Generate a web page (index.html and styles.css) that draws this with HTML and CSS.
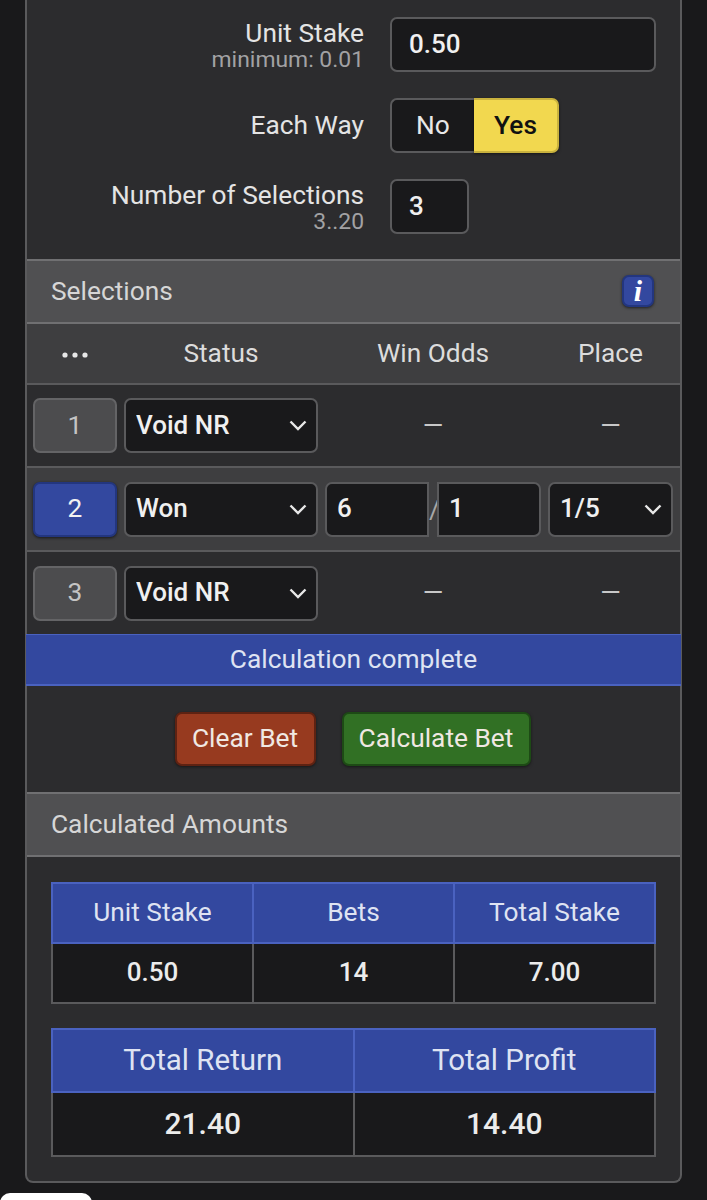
FILE: index.html
```html
<!DOCTYPE html>
<html lang="en">
<head>
    <meta charset="UTF-8">
    <meta name="viewport" content="width=device-width, initial-scale=1.0">
    <title>Bet Calculator</title>
    <link rel="stylesheet" href="styles.css">
</head>
<body>
    <div id="panel">
        <div class="form">
            <div class="field">
                <label class="label" for="unitStake">Unit Stake<small>minimum: 0.01</small></label>
                <input class="input stake" id="unitStake" type="text" value="0.50">
            </div>
            <div class="field">
                <span class="label label-single">Each Way</span>
                <div class="toggle">
                    <button class="toggle-no">No</button>
                    <button class="toggle-yes">Yes</button>
                </div>
            </div>
            <div class="field">
                <label class="label" for="numSelections">Number of Selections<small>3..20</small></label>
                <input class="input count" id="numSelections" type="text" value="3">
            </div>
        </div>

        <div class="section-head">
            <span>Selections</span>
            <button class="info">i</button>
        </div>

        <div class="row row-head">
            <span class="cell-center">
                <svg class="dots" width="26" height="6" viewBox="0 0 26 6"><circle cx="3" cy="3" r="2.6"/><circle cx="13" cy="3" r="2.6"/><circle cx="23" cy="3" r="2.6"/></svg>
            </span>
            <span class="cell-center">Status</span>
            <span class="cell-center">Win Odds</span>
            <span class="cell-center">Place</span>
        </div>

        <div class="row">
            <button class="num">1</button>
            <select class="input select"><option>Void NR</option></select>
            <span class="cell-center dash">—</span>
            <span class="cell-center dash">—</span>
        </div>
        <div class="row row-active">
            <button class="num num-active">2</button>
            <select class="input select"><option>Won</option></select>
            <div class="odds">
                <input class="input odds-left" type="text" value="6">
                <span class="slash">/</span>
                <input class="input odds-right" type="text" value="1">
            </div>
            <select class="input select"><option>1/5</option></select>
        </div>
        <div class="row row-last">
            <button class="num">3</button>
            <select class="input select"><option>Void NR</option></select>
            <span class="cell-center dash">—</span>
            <span class="cell-center dash">—</span>
        </div>

        <div class="message">Calculation complete</div>

        <div class="actions">
            <button class="btn btn-clear">Clear Bet</button>
            <button class="btn btn-calc">Calculate Bet</button>
        </div>

        <div class="section-head">
            <span>Calculated Amounts</span>
        </div>

        <div class="results">
            <table class="amounts">
                <tr><th>Unit Stake</th><th>Bets</th><th>Total Stake</th></tr>
                <tr><td>0.50</td><td>14</td><td>7.00</td></tr>
            </table>
            <table class="amounts amounts-big">
                <tr><th>Total Return</th><th>Total Profit</th></tr>
                <tr><td>21.40</td><td>14.40</td></tr>
            </table>
        </div>
    </div>
    <div class="tab"></div>
</body>
</html>
```

FILE: styles.css
```css
/* base */
html {
    height: 100%;
}

body {
    font-family: Roboto, "Liberation Sans", sans-serif;
    font-size: 26.3px;
    color: #e4e4e4;
    background-color: #19191b;
    margin: 0;
    height: 1200px;
    overflow: hidden;
    position: relative;
}

button, input, select {
    font-family: inherit;
    font-size: inherit;
}

#panel {
    width: 657px;
    box-sizing: border-box;
    margin-left: 25px;
    height: 1183px;
    background-color: #2c2c2e;
    border: 2px solid #5a5a5c;
    border-top: none;
    border-radius: 0 0 8px 8px;
}

/* top form */
.form {
    padding: 17px 0 25px;
    display: flex;
    flex-direction: column;
    gap: 26px;
}

.field {
    display: grid;
    grid-template-columns: 337px 1fr;
    column-gap: 26px;
    align-items: center;
    min-height: 55px;
}

.label {
    text-align: right;
    line-height: 30px;
}

.label-single {
    padding-bottom: 2px;
}

.label small {
    display: block;
    font-size: 22.9px;
    line-height: 24px;
    color: #a2a2a4;
}

.input {
    background-color: #19191b;
    color: #f0f0f0;
    border: 2px solid #5a5a5c;
    border-radius: 7px;
    box-sizing: border-box;
    height: 55px;
    padding: 0 17px 2px;
    font-size: 26px;
    font-weight: 500;
    outline: none;
}

.stake {
    width: 266px;
}

.count {
    width: 79px;
}

.toggle {
    display: flex;
    width: 169px;
    height: 55px;
}

.toggle button {
    padding: 0 0 2px;
    cursor: pointer;
}

.toggle-no {
    width: 84px;
    background-color: #19191b;
    color: #e8e8e8;
    border: 2px solid #5a5a5c;
    border-right: none;
    border-radius: 7px 0 0 7px;
}

.toggle-yes {
    width: 85px;
    background-color: #f2d84f;
    color: #111;
    font-weight: 500;
    border: 2px solid #c9b23e;
    border-left: none;
    border-radius: 0 7px 7px 0;
    box-shadow: 0 1px 3px rgba(0, 0, 0, 0.5);
}

/* section headers */
.section-head {
    display: flex;
    align-items: center;
    justify-content: space-between;
    height: 65px;
    box-sizing: border-box;
    padding: 0 26px 1px 24px;
    background-color: #505052;
    color: #d6d6d6;
    border-top: 2px solid #707072;
    border-bottom: 2px solid #707072;
}

.info {
    width: 32px;
    height: 32px;
    padding: 0;
    background-color: #33489f;
    color: #fff;
    border: 2px solid #23367f;
    border-radius: 7px;
    font-family: "Liberation Serif", serif;
    font-style: italic;
    font-weight: bold;
    font-size: 30px;
    line-height: 26px;
    box-shadow: 0 1px 3px rgba(0, 0, 0, 0.6);
}

/* selections table */
.row {
    display: grid;
    grid-template-columns: 84px 194px 216px 125px;
    column-gap: 7px;
    align-items: center;
    height: 83px;
    box-sizing: border-box;
    padding: 0 6px;
    border-bottom: 2px solid #5a5a5c;
}

.row-head {
    height: 61px;
    padding-bottom: 2px;
    background-color: #3e3e40;
    color: #dcdcdc;
}

.row-active {
    height: 84px;
    background-color: #3e3e40;
}

.row-last {
    height: 82px;
    border-bottom: none;
}

.cell-center {
    text-align: center;
}

.dots {
    fill: #e8e8e8;
    vertical-align: middle;
}

.dash {
    color: #c8c8c8;
    padding-bottom: 2px;
}

.num {
    height: 55px;
    padding: 0 0 2px;
    background-color: #4c4c4e;
    color: #c4c4c4;
    border: 2px solid #646466;
    border-radius: 7px;
}

.num-active {
    background-color: #33489f;
    color: #f2f2f2;
    border-color: #23367f;
    box-shadow: 0 1px 3px rgba(0, 0, 0, 0.6);
}

.select {
    width: 100%;
    padding: 0 10px 2px;
    appearance: none;
    -webkit-appearance: none;
    background-image: url("data:image/svg+xml,%3Csvg xmlns='http://www.w3.org/2000/svg' width='18' height='11' viewBox='0 0 18 11'%3E%3Cpath d='M1.500 1.500 9 9l7.500-7.500' fill='none' stroke='%23e8e8e8' stroke-width='2.400'/%3E%3C/svg%3E");
    background-repeat: no-repeat;
    background-position: right 9px center;
}

.odds {
    display: grid;
    grid-template-columns: 104px 8px 104px;
    align-items: center;
}

.odds .input {
    width: 100%;
    padding: 0 10px 2px;
}

.odds-left {
    border-radius: 7px 0 0 7px !important;
}

.odds-right {
    border-radius: 0 7px 7px 0 !important;
}

.slash {
    color: #a8a8a8;
    text-align: center;
}

/* status message */
.message {
    height: 52px;
    line-height: 48px;
    margin: 0 -1px;
    box-sizing: border-box;
    text-align: center;
    background-color: #33489f;
    color: #dfe3f2;
    border-top: 1px solid #4a62c0;
    border-bottom: 2px solid #4a62c0;
}

.actions {
    display: flex;
    justify-content: center;
    gap: 26px;
    padding: 26px 2px 26px 0;
}

.btn {
    height: 54px;
    padding: 0 0 2px;
    color: #f0e8e2;
    border-radius: 7px;
    box-shadow: 0 1px 3px rgba(0, 0, 0, 0.5);
    cursor: pointer;
}

.btn-clear {
    width: 141px;
    background-color: #973a1f;
    border: 2px solid #5e2212;
}

.btn-calc {
    width: 189px;
    background-color: #317024;
    border: 2px solid #1d4a15;
}

/* results */
.results {
    padding: 25px 24px 0;
}

.amounts {
    width: 605px;
    table-layout: fixed;
    border-collapse: collapse;
    margin-bottom: 24px;
    text-align: center;
}

.amounts th {
    height: 56px;
    padding: 0 0 2px;
    font-weight: 400;
    background-color: #33489f;
    color: #dfe3f2;
    border: 2px solid #4a62c0;
}

.amounts td {
    height: 56px;
    padding: 0 0 2px;
    font-size: 26px;
    font-weight: 500;
    background-color: #19191b;
    color: #ececec;
    border: 2px solid #5a5a5c;
}

.amounts-big th {
    height: 59px;
    font-size: 29.500px;
}

.amounts-big td {
    height: 60px;
    font-size: 30px;
}

.tab {
    position: absolute;
    left: 0;
    top: 1193px;
    width: 92px;
    height: 20px;
    background-color: #fff;
    border-radius: 10px 10px 0 0;
}
```
